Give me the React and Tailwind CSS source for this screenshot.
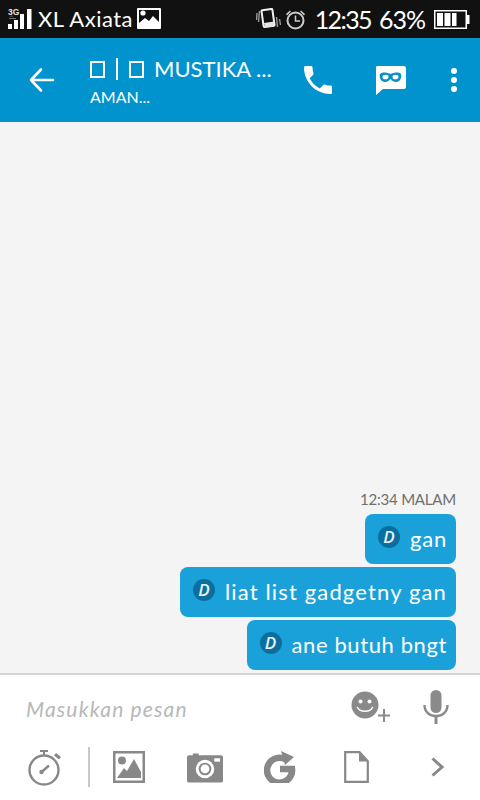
function Signal() {
  return (
    <svg width="24" height="22" viewBox="0 0 24 22" className="shrink-0">
      <text x="0" y="7" fontSize="8.500" fontWeight="700" fill="#e5e5e5" fontFamily="Liberation Sans, sans-serif">3G</text>
      <path d="M1 8.500l2.500-1 2.500 1z" fill="#777" />
      <rect x="1" y="10" width="7" height="1" fill="#777" />
      <rect x="0" y="16" width="4" height="5" fill="#fff" />
      <rect x="6" y="12" width="4" height="9" fill="#fff" />
      <rect x="12" y="6" width="4" height="15" fill="#fff" />
      <rect x="19" y="1" width="4.500" height="20" fill="#fff" />
    </svg>
  );
}

function PictureSolid() {
  return (
    <svg width="24" height="22" viewBox="0 0 24 22">
      <rect x="0" y="0" width="24" height="21" fill="#fff" rx="1" />
      <rect x="2" y="2" width="20" height="13" fill="#111" />
      <circle cx="6" cy="5" r="2.600" fill="#fff" />
      <path d="M2 15l6-5 4 3 4-5 6 6v3H2z" fill="#fff" />
    </svg>
  );
}

function VibratePhone() {
  return (
    <svg width="25" height="22" viewBox="0 0 25 22" fill="none">
      <rect x="6.500" y="1.500" width="11" height="17" rx="1" stroke="#f2f2f2" strokeWidth="2" transform="rotate(-8 12 10)" />
      <path d="M3.500 3l-1 11M1 5l-.5 7" strokeWidth="1.400" stroke="#999" />
      <path d="M20.500 9l1 10M23.500 11l1 6" strokeWidth="1.400" stroke="#999" />
      <path d="M8 15l10-1.500v5l-9 1z" fill="#e5e5e5" />
    </svg>
  );
}

function Alarm() {
  return (
    <svg width="21" height="21" viewBox="0 0 21 21" fill="none" stroke="#ccc">
      <circle cx="10.500" cy="11.500" r="8" strokeWidth="2" />
      <path d="M10.500 6.500v5.500h4.500" strokeWidth="1.500" />
      <path d="M1 5l4-3.500 1 1-4 4zM20 5l-4-3.500-1 1 4 4z" fill="#ccc" stroke="none" />
    </svg>
  );
}

function Battery() {
  return (
    <svg width="36" height="19" viewBox="0 0 36 19">
      <rect x="0.750" y="0.750" width="31.500" height="17.500" fill="none" stroke="#fff" strokeWidth="1.500" />
      <rect x="33" y="5" width="2.500" height="9" fill="#fff" />
      <rect x="3" y="3" width="6" height="13" fill="#fff" />
      <rect x="10.500" y="3" width="6" height="13" fill="#fff" />
      <rect x="18" y="3" width="4.500" height="13" fill="#fff" />
    </svg>
  );
}

function BackArrow() {
  return (
    <svg width="26" height="26" viewBox="0 0 26 26" fill="none" stroke="#fff" strokeWidth="2.600" strokeLinecap="round" strokeLinejoin="round">
      <path d="M2 13h22M12 2.500L2 13l10 10.500" />
    </svg>
  );
}

function Phone() {
  return (
    <svg width="28" height="28" viewBox="3 3 18 18" fill="#fff">
      <path d="M6.600 10.800c1.400 2.800 3.800 5.100 6.600 6.600l2.200-2.200c.3-.3.7-.4 1-.2 1.100.4 2.300.6 3.600.6.600 0 1 .4 1 1V20c0 .6-.4 1-1 1C10.600 21 3 13.400 3 4c0-.6.4-1 1-1h3.500c.6 0 1 .4 1 1 0 1.300.2 2.500.6 3.600.1.300 0 .7-.2 1z" />
    </svg>
  );
}

function MaskChat() {
  return (
    <svg width="31" height="29" viewBox="0 0 31 29">
      <path d="M2 0h27a2 2 0 012 2v19a2 2 0 01-2 2H8l-7 6V2a2 2 0 011-2z" fill="#fff" />
      <path d="M5 8c2-2 6-2 10.500 0 4.500-2 8.500-2 10.500 0 1 4-1 8-5 8-3 0-4-2-5.500-3-1.500 1-2.500 3-5.500 3-4 0-6-4-5-8z" fill="#0a8fc7" />
      <ellipse cx="10.500" cy="11" rx="3" ry="2.300" fill="#fff" />
      <ellipse cx="20.500" cy="11" rx="3" ry="2.300" fill="#fff" />
    </svg>
  );
}

function Bubble({ text, spacing }) {
  return (
    <div className="h-[50px] flex items-center gap-[10px] bg-[#1ba1da] rounded-[8px] pl-[13px] pr-[9px]">
      <span className="w-[22px] h-[22px] -mt-[4px] rounded-full bg-[#0a6f9e] flex items-center justify-center text-[17px] font-semibold italic text-[#e8f4fa] font-['Open_Sans',sans-serif]">D</span>
      <span className={`text-white text-[22px] leading-none font-['Lato',sans-serif] whitespace-nowrap ${spacing}`}>{text}</span>
    </div>
  );
}

function Smiley() {
  return (
    <svg width="41" height="33" viewBox="0 0 41 33" className="mt-[1px]">
      <circle cx="14" cy="14" r="13.500" fill="#8a8a8a" />
      <circle cx="9.500" cy="10.500" r="2" fill="#fff" />
      <circle cx="18.500" cy="10.500" r="2" fill="#fff" />
      <path d="M6.500 16.500c2.500 5 12.500 5 15 0" fill="none" stroke="#fff" strokeWidth="1.600" strokeLinecap="round" />
      <path d="M33 18v13M27 24.500h12" stroke="#8a8a8a" strokeWidth="2" />
    </svg>
  );
}

function Mic() {
  return (
    <svg width="26" height="34" viewBox="0 0 26 34">
      <rect x="7.500" y="0" width="11" height="23" rx="5.500" fill="#8a8a8a" />
      <path d="M1.500 15c0 7 5 11 11.500 11s11.500-4 11.500-11" fill="none" stroke="#8a8a8a" strokeWidth="2.400" />
      <rect x="11.500" y="26" width="3" height="8" fill="#8a8a8a" />
    </svg>
  );
}

function Timer() {
  return (
    <svg width="34" height="37" viewBox="0 0 34 37" fill="none" stroke="#888">
      <circle cx="16" cy="21" r="14.500" strokeWidth="2.400" />
      <path d="M12 1h8v2h-3v3h-2V3h-3z" fill="#888" stroke="none" />
      <path d="M28 4l5 4-2 2.500-5-4z" fill="#888" stroke="none" />
      <path d="M13 23.500l8-7" strokeWidth="2.400" />
      <circle cx="13.500" cy="23" r="2.200" fill="#888" stroke="none" />
    </svg>
  );
}

function PictureFrame() {
  return (
    <svg width="32" height="32" viewBox="0 0 32 32">
      <rect x="1.250" y="1.250" width="29.500" height="29.500" fill="none" stroke="#888" strokeWidth="2.500" />
      <circle cx="9" cy="9.500" r="4" fill="#888" />
      <path d="M4 27l7-10 3 3 7-12 7 13v6z" fill="#888" />
    </svg>
  );
}

function Camera() {
  return (
    <svg width="36" height="31" viewBox="0 0 37 31">
      <path d="M6 3V1h6v2h23a2 2 0 012 2v24a2 2 0 01-2 2H2a2 2 0 01-2-2V5a2 2 0 012-2z" fill="#888" />
      <circle cx="18.500" cy="17" r="9.500" fill="#fff" />
      <circle cx="18.500" cy="17" r="6.500" fill="#888" />
      <circle cx="18.500" cy="17" r="4.500" fill="#fff" />
      <rect x="28" y="6" width="6" height="3.500" fill="#fff" />
    </svg>
  );
}

function RefreshG() {
  return (
    <svg width="32" height="32" viewBox="0 0 32 32" fill="none">
      <path d="M22 8.500A12.500 12.500 0 1 0 28 18H16" stroke="#888" strokeWidth="6.500" />
      <path d="M17 0l13 6-9 8z" fill="#888" />
    </svg>
  );
}

function FileIcon() {
  return (
    <svg width="25" height="32" viewBox="0 0 25 32" fill="none" stroke="#888" strokeWidth="2.200">
      <path d="M1.200 1.200h14.300l8.300 9v20.600H1.200z" />
      <path d="M15 1.500v9h8.500z" fill="#888" stroke="none" />
    </svg>
  );
}

function Chevron() {
  return (
    <svg width="13" height="20" viewBox="0 0 13 20" fill="none" stroke="#888" strokeWidth="3">
      <path d="M1.500 1.500L11 10l-9.500 8.500" />
    </svg>
  );
}

function TofuBox() {
  return <span className="inline-block w-[15px] h-[17px] border-2 border-white" />;
}

export default function App() {
  return (
    <div className="w-[480px] h-[800px] flex flex-col bg-[#f4f4f4] overflow-hidden font-['Lato',sans-serif]">
      <div className="h-[38px] bg-[#111111] flex items-center pl-[8px] pr-[10px] text-white">
        <Signal />
        <span className="ml-[6px] text-[22px] leading-none tracking-[0.5px] whitespace-nowrap">XL Axiata</span>
        <span className="ml-[4px]"><PictureSolid /></span>
        <div className="flex-1" />
        <VibratePhone />
        <span className="ml-[4px]"><Alarm /></span>
        <span className="ml-[9px] text-[25px] leading-none tracking-[-1.6px] whitespace-nowrap">12:35</span>
        <span className="ml-[8px] text-[25px] leading-none tracking-[-1px] whitespace-nowrap">63%</span>
        <span className="ml-[9px]"><Battery /></span>
      </div>

      <div className="h-[84px] bg-[#0093cd] flex items-center text-white">
        <span className="ml-[29px]"><BackArrow /></span>
        <div className="ml-[35px] mt-[4px] w-[200px] flex flex-col">
          <span className="h-[26px] flex items-center gap-[11px] text-[22px] leading-none whitespace-nowrap">
            <TofuBox />
            <span className="w-[2px] h-[22px] bg-white" />
            <TofuBox />
            <span className="-ml-[1px]">MUSTIKA ...</span>
          </span>
          <span className="mt-[4px] text-[16px] leading-[22px]">AMAN...</span>
        </div>
        <div className="ml-[14px] flex items-center">
          <Phone />
          <span className="ml-[43px]"><MaskChat /></span>
          <div className="ml-[45px] flex flex-col gap-[3px]">
            <span className="w-[6px] h-[6px] rounded-full bg-white" />
            <span className="w-[6px] h-[6px] rounded-full bg-white" />
            <span className="w-[6px] h-[6px] rounded-full bg-white" />
          </div>
        </div>
      </div>

      <div className="flex-1 flex flex-col justify-end items-end pr-[24px] pb-[3px] gap-[3px]">
        <span className="text-[15px] leading-[20px] tracking-[-0.2px] text-[#6f6f6f] mb-[2px] whitespace-nowrap">12:34 MALAM</span>
        <Bubble text="gan" spacing="tracking-[0.8px]" />
        <Bubble text="liat list gadgetny gan" spacing="tracking-[1.15px]" />
        <Bubble text="ane butuh bngt" spacing="tracking-[0.6px]" />
      </div>

      <div className="h-[127px] bg-white border-t-2 border-[#d4d4d4] flex flex-col">
        <div className="h-[64px] flex items-center pl-[26px] pr-[31px]">
          <span className="flex-1 mt-[4px] text-[21px] italic text-[#b8b8b8] tracking-[1.15px]">Masukkan pesan</span>
          <Smiley />
          <span className="ml-[31px]"><Mic /></span>
        </div>
        <div className="flex items-center h-[56px] pl-[28px]">
          <Timer />
          <span className="ml-[26px] w-[2px] h-[40px] bg-[#c8c8c8]" />
          <span className="ml-[23px]"><PictureFrame /></span>
          <span className="ml-[42px]"><Camera /></span>
          <span className="ml-[41px]"><RefreshG /></span>
          <span className="ml-[48px]"><FileIcon /></span>
          <span className="ml-[62px]"><Chevron /></span>
        </div>
      </div>
    </div>
  );
}
